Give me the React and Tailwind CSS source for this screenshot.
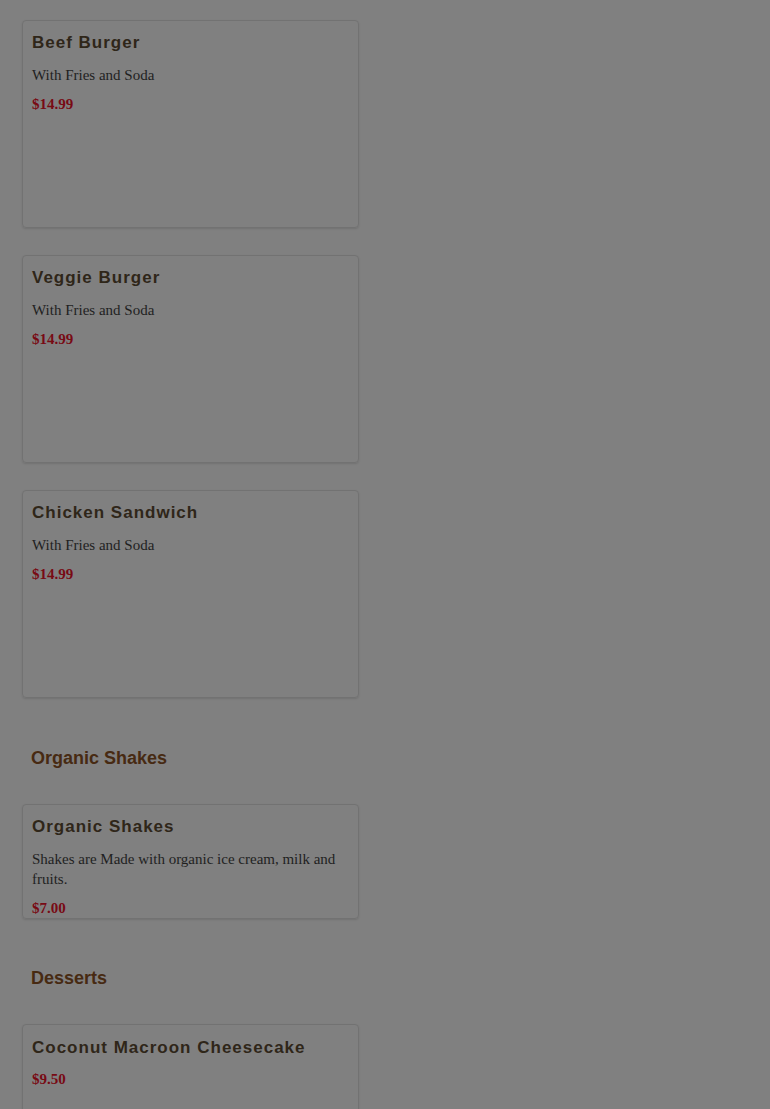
import React from "react";

function Card({ title, desc, price, tall, extraTop }) {
  return (
    <div
      className={`flex flex-col w-[337px] border border-[#727272] rounded-[4px] shadow-[0_1px_2px_rgba(0,0,0,0.12)] px-[9px] ${extraTop ? "pt-[12px]" : "pt-[11px]"} ${tall ? "h-[208px]" : ""}`}
    >
      <div className="font-['Liberation_Sans',Arial,sans-serif] text-[17px] leading-[22px] font-bold tracking-[1px] text-[#2f2619]">
        {title}
      </div>
      {desc && (
        <div className="mt-[11px] pr-[10px] font-['Liberation_Serif','Times_New_Roman',serif] text-[15px] leading-[20px] text-[#1f1f1f]">
          {desc}
        </div>
      )}
      <div
        className={`${desc ? "mt-[9px]" : "mt-[10px]"} font-['Liberation_Serif','Times_New_Roman',serif] text-[15px] leading-[20px] font-bold text-[#780a14]`}
      >
        {price}
      </div>
    </div>
  );
}

function Heading({ children, first }) {
  return (
    <div
      className={`${first ? "mt-[22px]" : "mt-[21px]"} pl-[9px] font-['Liberation_Sans',Arial,sans-serif] text-[18px] leading-[22px] font-bold text-[#472a12]`}
    >
      {children}
    </div>
  );
}

export default function App() {
  return (
    <div className="min-h-[1109px] w-full bg-[#808080] overflow-hidden">
      <div className="flex flex-col pl-[22px] pt-[20px]">
        <div className="flex flex-col gap-[27px]">
          <Card title="Beef Burger" desc="With Fries and Soda" price="$14.99" tall />
          <Card title="Veggie Burger" desc="With Fries and Soda" price="$14.99" tall />
          <Card title="Chicken Sandwich" desc="With Fries and Soda" price="$14.99" tall />
        </div>
        <div className="flex flex-col gap-[35px] mt-[27px]">
          <Heading first>Organic Shakes</Heading>
          <Card
            title="Organic Shakes"
            desc="Shakes are Made with organic ice cream, milk and fruits."
            price="$7.00"
          />
        </div>
        <div className="flex flex-col gap-[35px] mt-[27px]">
          <Heading>Desserts</Heading>
          <div className="h-[120px] flex flex-col">
            <Card title="Coconut Macroon Cheesecake" price="$9.50" tall extraTop />
          </div>
        </div>
      </div>
    </div>
  );
}
